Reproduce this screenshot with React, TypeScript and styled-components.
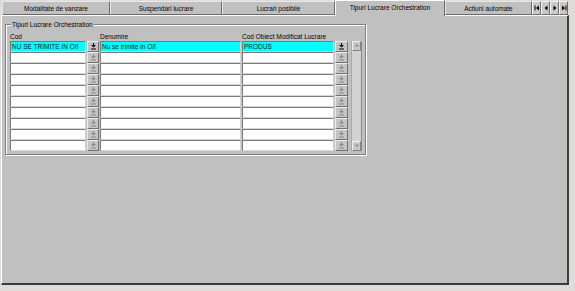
import React from "react";
import styled, { createGlobalStyle } from "styled-components";

const Global = createGlobalStyle`
  html, body { margin: 0; padding: 0; background: #dedcd8; }
  body { font-family: "Liberation Sans", Arial, sans-serif; }
  * { box-sizing: border-box; }
`;

const Window = styled.div`
  width: 568px;
  height: 285px;
  margin-left: 1px;
  display: flex;
  flex-direction: column;
  font-family: "Liberation Sans", Arial, sans-serif;
  font-size: 6.5px;
  color: #000;
`;

const TabBar = styled.div`
  height: 15px;
  display: flex;
  align-items: flex-end;
  padding-left: 1px;
  position: relative;
  z-index: 1;
`;

const Tab = styled.div<{ $w: number; $active?: boolean }>`
  width: ${(p) => p.$w}px;
  height: ${(p) => (p.$active ? 16 : 14)}px;
  margin-bottom: ${(p) => (p.$active ? -1 : 0)}px;
  background: #c0c0c0;
  border-top: 1px solid ${(p) => (p.$active ? "#ffffff" : "#e8e8e8")};
  border-left: 1px solid ${(p) => (p.$active ? "#ffffff" : "#e8e8e8")};
  border-right: 1px solid #6a6a6a;
  border-bottom: ${(p) => (p.$active ? "none" : "1px solid #6a6a6a")};
  display: flex;
  align-items: center;
  justify-content: center;
  white-space: nowrap;
  font-size: 6.5px;
  padding-bottom: ${(p) => (p.$active ? 2 : 0)}px;
`;

const NavGroup = styled.div`
  display: flex;
  height: 14px;
  margin-left: 0px;
`;

const NavBtn = styled.div`
  width: 9px;
  height: 14px;
  background: #c8c8c8;
  border-top: 1px solid #f4f4f4;
  border-left: 1px solid #f4f4f4;
  border-right: 1px solid #707070;
  border-bottom: 1px solid #707070;
  display: flex;
  align-items: center;
  justify-content: center;
`;

const Panel = styled.div`
  flex: 1;
  background: #c0c0c0;
  border-top: 1px solid #ffffff;
  border-left: 1px solid #ffffff;
  border-right: 2px solid #3c3c3c;
  border-bottom: 2px solid #3c3c3c;
  padding: 8px 0 0 3px;
`;

const Group = styled.div`
  position: relative;
  width: 361px;
  height: 131px;
  border: 1px solid #808080;
  box-shadow: inset 1px 1px 0 #ffffff, 1px 1px 0 #ffffff;
  padding: 7px 0 0 4px;
`;

const Legend = styled.span`
  position: absolute;
  top: -5px;
  left: 5px;
  background: #c0c0c0;
  padding: 0 1px;
  line-height: 9px;
  font-size: 6.5px;
  white-space: nowrap;
`;

const Cols = "76px 12px 141px 92px 13px";

const HeaderRow = styled.div`
  display: grid;
  grid-template-columns: ${Cols};
  column-gap: 1px;
  height: 9px;
  line-height: 9px;
`;

const HeaderLabel = styled.div<{ $span?: number }>`
  grid-column: span ${(p) => p.$span ?? 1};
  white-space: nowrap;
  padding-left: 0px;
  font-size: 6.5px;
`;

const Body = styled.div`
  display: flex;
  align-items: flex-start;
`;

const Rows = styled.div`
  display: grid;
  grid-template-columns: ${Cols};
  grid-auto-rows: 11px;
  column-gap: 1px;
`;

const Field = styled.div<{ $sel?: boolean }>`
  height: 11px;
  background: ${(p) => (p.$sel ? "#00ffff" : "#ffffff")};
  border-top: 1px solid #7a7a7a;
  border-left: 1px solid #7a7a7a;
  border-bottom: 1px solid #d6d6d6;
  border-right: 1px solid #d6d6d6;
  padding-left: 1px;
  line-height: 9px;
  font-size: 6.5px;
  white-space: nowrap;
  overflow: hidden;
  color: #001818;
`;

const LovBtn = styled.div`
  height: 11px;
  background: #c4c4c4;
  border-top: 1px solid #ececec;
  border-left: 1px solid #ececec;
  border-right: 1px solid #707070;
  border-bottom: 1px solid #707070;
  display: flex;
  align-items: center;
  justify-content: center;
`;

const Scroll = styled.div`
  margin-left: 3px;
  width: 11px;
  height: 110px;
  display: flex;
  flex-direction: column;
  background: #d4d4d4;
  border-left: 1px solid #a8a8a8;
  border-right: 1px solid #8a8a8a;
`;

const ScrollBtn = styled.div`
  height: 10px;
  background: #c8c8c8;
  border-top: 1px solid #f0f0f0;
  border-left: 1px solid #f0f0f0;
  border-right: 1px solid #808080;
  border-bottom: 1px solid #808080;
  display: flex;
  align-items: center;
  justify-content: center;
`;

const Track = styled.div`
  flex: 1;
  background: #d2d2d2;
`;

const LovIcon = ({ active }: { active: boolean }) => {
  const c = active ? "#000000" : "#8a8a8a";
  return (
    <svg width="7" height="7" viewBox="0 0 7 7">
      <rect x="3" y="0" width="1" height="2" fill={c} />
      <polygon points="1,2 6,2 3.5,4.6" fill={c} />
      <rect x="1" y="5.5" width="5" height="1" fill={c} />
    </svg>
  );
};

const Tri = ({ dir, color }: { dir: "up" | "down" | "left" | "right"; color: string }) => {
  const pts: Record<string, string> = {
    up: "0.5,3.5 5.5,3.5 3,1",
    down: "0.5,1.5 5.5,1.5 3,4",
    left: "4,0.5 4,5.5 1.5,3",
    right: "2,0.5 2,5.5 4.5,3",
  };
  return (
    <svg width="6" height="6" viewBox="0 0 6 6">
      <polygon points={pts[dir]} fill={color} />
    </svg>
  );
};

const NavIcon = ({ kind }: { kind: "first" | "prev" | "next" | "last" }) => (
  <svg width="6" height="6" viewBox="0 0 6 6">
    {kind === "first" && (
      <>
        <rect x="0.5" y="0.5" width="1" height="5" fill="#000" />
        <polygon points="5,0.5 5,5.5 2,3" fill="#000" />
      </>
    )}
    {kind === "prev" && <polygon points="4.5,0.5 4.5,5.5 1.5,3" fill="#000" />}
    {kind === "next" && <polygon points="1.5,0.5 1.5,5.5 4.5,3" fill="#000" />}
    {kind === "last" && (
      <>
        <polygon points="1,0.5 1,5.5 4,3" fill="#000" />
        <rect x="4.5" y="0.5" width="1" height="5" fill="#000" />
      </>
    )}
  </svg>
);

const tabs = [
  { label: "Modalitate de vanzare", w: 108 },
  { label: "Suspendari lucrare", w: 112 },
  { label: "Lucrari posibile", w: 113 },
  { label: "Tipuri Lucrare Orchestration", w: 110, active: true },
  { label: "Actiuni automate", w: 87 },
];

const rows = Array.from({ length: 10 }, (_, i) =>
  i === 0
    ? { cod: "NU SE TRIMITE IN O/I", den: "Nu se trimite in O/I", obj: "PRODUS" }
    : { cod: "", den: "", obj: "" }
);

export default function App() {
  return (
    <>
      <Global />
      <Window>
        <TabBar>
          {tabs.map((t) => (
            <Tab key={t.label} $w={t.w} $active={t.active}>
              {t.label}
            </Tab>
          ))}
          <NavGroup>
            <NavBtn><NavIcon kind="first" /></NavBtn>
            <NavBtn><NavIcon kind="prev" /></NavBtn>
            <NavBtn><NavIcon kind="next" /></NavBtn>
            <NavBtn><NavIcon kind="last" /></NavBtn>
          </NavGroup>
        </TabBar>
        <Panel>
          <Group>
            <Legend>Tipuri Lucrare Orchestration</Legend>
            <HeaderRow>
              <HeaderLabel $span={2}>Cod</HeaderLabel>
              <HeaderLabel>Denumire</HeaderLabel>
              <HeaderLabel $span={2}>Cod Obiect Modificat Lucrare</HeaderLabel>
            </HeaderRow>
            <Body>
              <Rows>
                {rows.map((r, i) => (
                  <React.Fragment key={i}>
                    <Field $sel={i === 0}>{r.cod}</Field>
                    <LovBtn><LovIcon active={i === 0} /></LovBtn>
                    <Field $sel={i === 0}>{r.den}</Field>
                    <Field $sel={i === 0}>{r.obj}</Field>
                    <LovBtn><LovIcon active={i === 0} /></LovBtn>
                  </React.Fragment>
                ))}
              </Rows>
              <Scroll>
                <ScrollBtn><Tri dir="up" color="#909090" /></ScrollBtn>
                <Track />
                <ScrollBtn><Tri dir="down" color="#909090" /></ScrollBtn>
              </Scroll>
            </Body>
          </Group>
        </Panel>
      </Window>
    </>
  );
}
